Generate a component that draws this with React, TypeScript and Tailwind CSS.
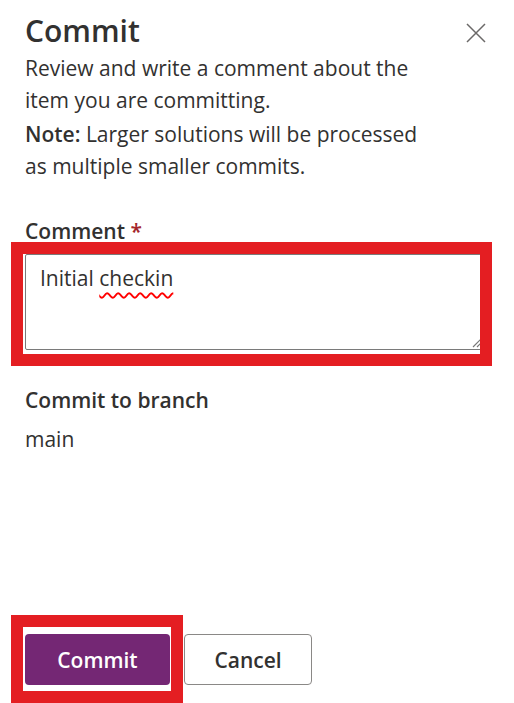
import React from "react"

function CloseIcon() {
  return (
    <svg width="20" height="20" viewBox="0 0 20 20" fill="none" stroke="#6b6968" strokeWidth="1.5">
      <path d="M1 1 L19 19 M19 1 L1 19" />
    </svg>
  )
}

export default function App() {
  return (
    <div className="h-[703px] w-[514px] bg-white text-[#323130] font-['Segoe_UI','Open_Sans',sans-serif] flex flex-col overflow-hidden">
      {/* Header */}
      <div className="flex items-start justify-between pl-[25px] pr-[28px] pt-[13px]">
        <h1 className="text-[30px] leading-[36px] font-semibold">Commit</h1>
        <button className="mt-[10px]" aria-label="Close">
          <CloseIcon />
        </button>
      </div>

      <div className="pl-[25px]">
        <p className="mt-[3px] text-[21px] leading-[32px] whitespace-nowrap">
          Review and write a comment about the
          <br />
          item you are committing.
        </p>
        <p className="mt-[2px] text-[21px] leading-[32px] whitespace-nowrap">
          <span className="font-semibold">Note:</span> Larger solutions will be processed
          <br />
          as multiple smaller commits.
        </p>

        <label className="mt-[38px] block text-[21px] leading-[22px] font-semibold">
          Comment <span className="text-[#a4262c]">*</span>
        </label>
      </div>

      {/* Comment field, highlighted */}
      <div className="ml-[11px] w-[481px] h-[124px] border-[12px] border-[#e41e22] overflow-hidden">
        <div className="relative ml-[2px] w-[462px] h-[96px] border border-[#7a7a7a] rounded-[2px] pl-[14px] pt-[9px] text-[21px] leading-[28px]">
          Initial{" "}
          <span className="underline decoration-wavy decoration-[#ff0000] decoration-[1.5px] underline-offset-[6px]">checkin</span>
          <svg className="absolute right-[4px] bottom-[1px]" width="10" height="10" viewBox="0 0 10 10" stroke="#777" strokeWidth="1.2">
            <path d="M1 9 L9 1 M5 9 L9 5" />
          </svg>
        </div>
      </div>

      <div className="pl-[25px]">
        <div className="mt-[20px] text-[21px] leading-[28px] font-semibold">Commit to branch</div>
        <div className="mt-[11px] text-[21px] leading-[28px]">main</div>
      </div>

      {/* Footer */}
      <div className="mt-auto flex items-start">
        <div className="ml-[11px] w-[172px] h-[88px] border-[12px] border-[#e41e22]">
          <button className="ml-[2px] mt-[7px] w-[145px] h-[51px] pt-[2px] rounded-[4px] bg-[#742774] text-white text-[21px] font-semibold">
            Commit
          </button>
        </div>
        <button className="ml-[1px] mt-[19px] w-[128px] h-[51px] pt-[2px] rounded-[4px] border border-[#8a8886] bg-white text-[21px] font-semibold text-[#323130]">
          Cancel
        </button>
      </div>
    </div>
  )
}
